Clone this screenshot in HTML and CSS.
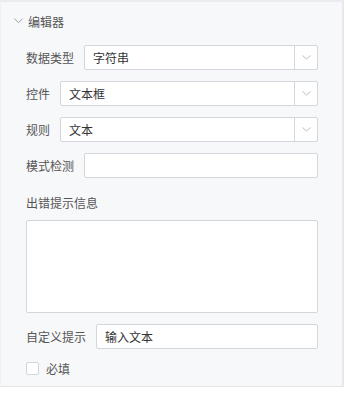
FILE: index.html
```html
<!DOCTYPE html>
<html lang="zh-CN">
<head>
    <meta charset="UTF-8">
    <meta name="viewport" content="width=device-width, initial-scale=1.0">
    <title>编辑器</title>
    <link rel="stylesheet" href="styles.css">
</head>
<body>
    <div class="panel">
        <div class="section-head">
            <svg class="chevron" width="9" height="6" viewBox="0 0 9 6"><polyline points="0.5,0.8 4.5,4.6 8.5,0.8" fill="none" stroke="#9a9ea6" stroke-width="1"/></svg>
            <span>编辑器</span>
        </div>

        <div class="form">
            <div class="row">
                <label>数据类型</label>
                <div class="select">
                    <span class="value">字符串</span>
                    <span class="arrow"><svg width="9" height="5" viewBox="0 0 9 5"><polyline points="0.5,0.5 4.5,4 8.5,0.5" fill="none" stroke="#b8bcc2" stroke-width="1"/></svg></span>
                </div>
            </div>
            <div class="row">
                <label>控件</label>
                <div class="select">
                    <span class="value">文本框</span>
                    <span class="arrow"><svg width="9" height="5" viewBox="0 0 9 5"><polyline points="0.5,0.5 4.5,4 8.5,0.5" fill="none" stroke="#b8bcc2" stroke-width="1"/></svg></span>
                </div>
            </div>
            <div class="row">
                <label>规则</label>
                <div class="select">
                    <span class="value">文本</span>
                    <span class="arrow"><svg width="9" height="5" viewBox="0 0 9 5"><polyline points="0.5,0.5 4.5,4 8.5,0.5" fill="none" stroke="#b8bcc2" stroke-width="1"/></svg></span>
                </div>
            </div>
            <div class="row">
                <label>模式检测</label>
                <div class="input"></div>
            </div>

            <div class="block-label">出错提示信息</div>
            <div class="textarea"></div>

            <div class="row">
                <label>自定义提示</label>
                <div class="input"><span class="value">输入文本</span></div>
            </div>

            <div class="check-row">
                <span class="checkbox"></span>
                <span>必填</span>
            </div>
        </div>
    </div>
</body>
</html>
```

FILE: styles.css
```css
body {
    margin: 0;
    background: #fff;
    font-family: "Noto Sans CJK SC", "Noto Sans", sans-serif;
    font-size: 12px;
    color: #555;
}
.panel {
    width: 344px;
    background: #f7f8fa;
    border-top: 2px solid #eaecf0;
    border-right: 2px solid #e6e8ec;
    border-left: 1px solid #eef0f3;
    border-bottom: 1px solid #e3e5e9;
    box-sizing: border-box;
}
.section-head {
    height: 38px;
    display: flex;
    align-items: center;
    padding-left: 13px;
    color: #555;
}
.chevron {
    margin-right: 5px;
}
.form {
    padding: 5px 24px 11px 25px;
}
.row {
    display: flex;
    align-items: center;
    gap: 10px;
    margin-bottom: 11px;
}
.row label {
    white-space: nowrap;
    color: #555;
}
.select, .input {
    flex: 1;
    height: 25px;
    display: flex;
    align-items: center;
    background: #fff;
    border: 1px solid #d3d6db;
    border-radius: 2px;
    box-sizing: border-box;
    color: #333;
}
.value {
    flex: 1;
    padding-left: 8px;
}
.arrow {
    width: 22px;
    height: 100%;
    border-left: 1px solid #d3d6db;
    display: flex;
    align-items: center;
    justify-content: center;
}
.block-label {
    height: 20px;
    line-height: 20px;
    margin-top: 15px;
    margin-bottom: 7px;
}
.textarea {
    height: 93px;
    background: #fff;
    border: 1px solid #d3d6db;
    border-radius: 2px;
    box-sizing: border-box;
    margin-bottom: 11px;
}
.check-row {
    display: flex;
    align-items: center;
    gap: 7px;
    margin-top: 13px;
    height: 13px;
}
.checkbox {
    width: 13px;
    height: 13px;
    background: #fff;
    border: 1px solid #d3d6db;
    border-radius: 2px;
    box-sizing: border-box;
}
```
